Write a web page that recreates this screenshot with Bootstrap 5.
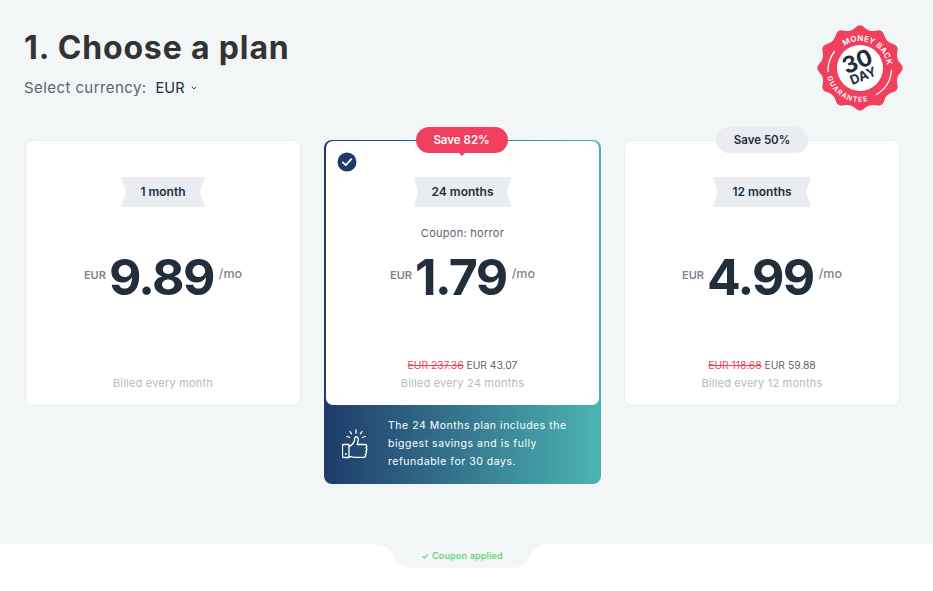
<!doctype html>
<html lang="en"><head><meta charset="utf-8"><title>Choose a plan</title>
<link href="https://cdn.jsdelivr.net/npm/bootstrap@5.3.0/dist/css/bootstrap.min.css" rel="stylesheet">
<style>
html,body{height:100%}
body{background:#fff;font-family:Inter,"Liberation Sans",sans-serif;color:#222e3c;overflow:hidden}
.stage{height:544px;background:#f2f6f7;padding:0 33px 0 25px;position:relative}
.head-row{height:140px;padding-top:29px}
.page-title{font-size:32px;line-height:38px;font-weight:700;color:#333;margin:0 0 0 -1px;letter-spacing:.85px}
.cur-row{margin-top:11px;margin-left:-1px;font-size:15px;line-height:20px;color:#5b6570;letter-spacing:.42px}
.cur-val{color:#222e3c;margin-left:9px;font-size:14.5px;font-weight:400;letter-spacing:.1px}
.cur-caret{margin-left:6px;margin-bottom:1px}
.seal{position:absolute;left:817px;top:25px}
.plans{gap:23px;align-items:flex-start}
.plan-wrap{width:276px;flex:none;position:relative}
.plan{height:266px;background:#fff;border:1px solid #e8ebef;border-radius:8px;text-align:center;position:relative}
.plan-mid{width:277px;background:linear-gradient(90deg,#1f3b6b 0%,#4bb4b3 100%);border-radius:8px;padding:1px 2px 0 2px;height:344px}
.plan-mid .plan{border:0;height:264px;border-radius:7px}
.check-ic{margin:11px 0 0 11px}
.save-tag{position:absolute;top:-13px;left:50%;transform:translateX(-50%);height:26px;width:92px;border-radius:13px;font-size:11.5px;line-height:26px;font-weight:600;text-align:center;z-index:2}
.save-red{background:#f13f5e;color:#fff;margin-left:-1px}
.save-red::after{content:"";position:absolute;left:42px;bottom:-3px;border:4px solid transparent;border-bottom:0;border-top-color:#f13f5e}
.save-gray{background:#e9ecf1;color:#222e3c}
.ribbon{position:absolute;top:36px;left:50%;transform:translateX(-50%);width:84px;height:30px;background:#e9ecf1;font-size:12px;font-weight:600;line-height:30px;clip-path:polygon(0 0,100% 0,94% 50%,100% 100%,0 100%,6% 50%);white-space:nowrap}
.plan-mid .ribbon,.rib-wide{width:98px;clip-path:polygon(0 0,100% 0,95% 50%,100% 100%,0 100%,5% 50%)}
.coupon-line{position:absolute;top:84px;left:0;right:0;font-size:11px;line-height:16px;color:#5b6570;letter-spacing:.28px}
.price{position:absolute;top:104px;left:0;right:0;height:64px;display:flex;justify-content:center;align-items:center}
.price-cur{font-size:11px;font-weight:600;color:#7d8590;margin-right:3px;margin-bottom:3px}
.price-num{font-size:50px;line-height:64px;font-weight:700;color:#222e3c;letter-spacing:-1.6px}
.price-per{font-size:12.5px;font-weight:500;color:#7d8590;margin-left:5px;margin-bottom:5px}
.old-new{position:absolute;top:216px;left:0;right:0;font-size:10.3px;line-height:16px;color:#5b6570}
.old-new s{color:#f13f5e}
.billed{position:absolute;top:234px;left:0;right:0;font-size:11px;line-height:16px;color:#b5bac1;letter-spacing:.2px}
.note{height:78px;display:flex;align-items:center;color:#fff;font-size:10.5px;line-height:18px;letter-spacing:.52px;padding:0 0 0 16px}
.note svg{flex:none;margin-right:20px}
.foot-tab{position:absolute;left:372px;top:544px;width:180px;height:24px}
.foot-tab svg{position:absolute;left:0;top:0}
.foot-txt{position:absolute;left:0;right:0;top:4px;text-align:center;font-size:9px;line-height:16px;color:#55d268;font-weight:500;letter-spacing:.22px}
</style></head>
<body>
<div class="stage">
  <div class="head-row">
    <h1 class="page-title">1. Choose a plan</h1>
    <div class="cur-row d-flex align-items-center">Select currency:<span class="cur-val">EUR</span>
      <svg class="cur-caret" width="6" height="4" viewBox="0 0 6 4" aria-hidden="true"><path d="M.8.8 3 3 5.200.8" fill="none" stroke="#222e3c" stroke-width=".9"/></svg></div>
  </div>
  <svg class="seal" width="86" height="86" viewBox="0 0 86 86" role="img" aria-label="30 day money back guarantee">
    <path fill="#f13f5e" d="M83.37 38.21Q88 43 83.37 47.79T80.36 59.04T75.57 67.33T67.33 75.57T59.04 80.36T47.79 83.37T38.21 83.37T26.96 80.36T18.67 75.57T10.43 67.33T5.64 59.04T2.63 47.79T2.63 38.21T5.64 26.96T10.43 18.67T18.67 10.43T26.96 5.64T38.21 2.63T47.79 2.63T59.04 5.64T67.33 10.43T75.57 18.67T80.36 26.96T83.37 38.21Z"/>
    <circle cx="43" cy="43" r="23" fill="#fff"/>
    <path d="M17.500 26.500a31 31 0 0 0-6.500 20M74.500 45.500a31 31 0 0 1-15 24" fill="none" stroke="#fff" stroke-width="1.300" stroke-linecap="round"/>
    <defs>
      <path id="arcTop" d="M27.300 21.200A27 27 0 0 1 69.900 40.600"/>
      <path id="arcBot" d="M10 52A34 34 0 0 0 56.500 74"/>
    </defs>
    <text font-family="Inter,sans-serif" font-size="8" font-weight="600" fill="#fff"><textPath href="#arcTop" textLength="56" lengthAdjust="spacing">MONEY BACK</textPath></text>
    <text font-family="Inter,sans-serif" font-size="7" font-weight="600" fill="#fff"><textPath href="#arcBot" textLength="52" lengthAdjust="spacing">GUARANTEE</textPath></text>
    <g transform="rotate(-22 43 43)" text-anchor="middle" font-family="Inter,sans-serif" fill="#222e3c" font-weight="700">
      <text x="43" y="44" font-size="23">30</text>
      <text x="43" y="56" font-size="13">DAY</text>
    </g>
  </svg>

  <div class="plans d-flex">
    <div class="plan-wrap">
      <div class="plan">
        <div class="ribbon">1 month</div>
        <div class="price"><span class="price-cur">EUR</span><span class="price-num">9.89</span><span class="price-per">/mo</span></div>
        <div class="billed">Billed every month</div>
      </div>
    </div>
    <div class="plan-wrap plan-mid">
      <div class="save-tag save-red">Save 82%</div>
      <div class="plan">
        <svg class="position-absolute top-0 start-0 check-ic" width="20" height="20" viewBox="0 0 20 20" aria-hidden="true"><circle cx="10" cy="10" r="9.500" fill="#1f3b6b"/><path d="m5.800 10.300 3 2.800 5.500-6" fill="none" stroke="#fff" stroke-width="1.800" stroke-linecap="round" stroke-linejoin="round"/></svg>
        <div class="ribbon">24 months</div>
        <div class="coupon-line">Coupon: horror</div>
        <div class="price"><span class="price-cur">EUR</span><span class="price-num">1.79</span><span class="price-per">/mo</span></div>
        <div class="old-new"><s>EUR 237.36</s> EUR 43.07</div>
        <div class="billed">Billed every 24 months</div>
      </div>
      <div class="note">
        <svg width="26" height="31" viewBox="0 0 26 31" fill="none" stroke="#fff" stroke-width="1.300" stroke-linecap="round" stroke-linejoin="round" aria-hidden="true">
          <path d="M1.500 15.500h5.500v13H1.500a1 1 0 0 1-1-1v-11a1 1 0 0 1 1-1z"/>
          <path d="M7 17.500c2.500-1 4.500-3 5.300-5.500.4-1.500.1-3.600 1.200-4.200 1.500-.6 2.800.9 2.800 2.800 0 1.700-.7 3.400-1.100 4.900h7.800c2 0 2.500 2.700.8 3.300 1.600.6 1.500 3-.2 3.400 1.400.6 1.200 2.800-.4 3.200 1 .8.500 3-1.400 3h-8.300c-2.500 0-4-.7-6.500-1"/>
          <circle cx="3.800" cy="25" r=".4"/>
          <path d="M14 1v3.200M8 2.500l1.500 2.300M20 2.500l-1.600 2.300M5 7.500l2.800 1M23.500 7.500l-3.200 1"/>
        </svg>
        <div>The 24 Months plan includes the<br>biggest savings and is fully<br>refundable for 30 days.</div>
      </div>
    </div>
    <div class="plan-wrap">
      <div class="save-tag save-gray">Save 50%</div>
      <div class="plan">
        <div class="ribbon rib-wide">12 months</div>
        <div class="price"><span class="price-cur">EUR</span><span class="price-num">4.99</span><span class="price-per">/mo</span></div>
        <div class="old-new"><s>EUR 118.68</s> EUR 59.88</div>
        <div class="billed">Billed every 12 months</div>
      </div>
    </div>
  </div>
</div>
<div class="foot-tab">
  <svg width="180" height="24" viewBox="0 0 180 24" aria-hidden="true"><path d="M0 0c14 0 17 5 22 12 5 8 9 12 20 12h96c11 0 15-4 20-12 5-7 8-12 22-12z" fill="#f2f6f7"/></svg>
  <div class="foot-txt">✓ Coupon applied</div>
</div>
</body></html>
